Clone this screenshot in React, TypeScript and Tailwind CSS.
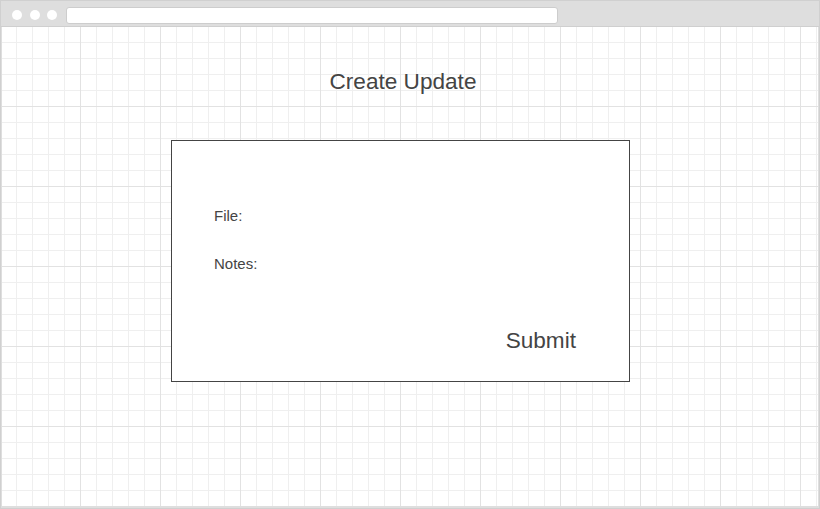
export default function App() {
  return (
    <div className="w-[820px] h-[509px] flex flex-col border border-[#d0d0d0] bg-[#dedede] font-['Liberation_Sans',Arial,sans-serif] text-[#444]">
      {/* Browser chrome */}
      <div className="h-[26px] shrink-0 flex items-start border-b border-[#cfcfcf] pl-[11px]">
        <div className="mt-[9px] flex gap-[7.5px]">
          <span className="w-[10px] h-[10px] rounded-full bg-white" />
          <span className="w-[10px] h-[10px] rounded-full bg-white" />
          <span className="w-[10px] h-[10px] rounded-full bg-white" />
        </div>
        <div className="mt-[6px] ml-[9px] w-[492px] h-[17px] rounded-[3px] bg-white border border-[#cdcdcd]" />
      </div>

      {/* Canvas */}
      <div className="flex-1 mx-px mb-[2px] bg-white bg-[linear-gradient(to_right,#e2e2e2_1px,transparent_1px),linear-gradient(to_bottom,#e2e2e2_1px,transparent_1px),linear-gradient(to_right,#efefef_1px,transparent_1px),linear-gradient(to_bottom,#efefef_1px,transparent_1px)] bg-[length:80px_80px,80px_80px,16px_16px,16px_16px] bg-[position:78px_0,0_79px,14px_0,0_15px]">
        <div className="ml-[169px] w-[459px] flex flex-col">
          <h1 className="mt-[41px] pl-[5px] text-center text-[22.6px] leading-[28px] font-normal">
            Create Update
          </h1>

          <div className="mt-[44px] h-[242px] border border-[#444] bg-white flex flex-col">
            <div className="mt-[66px] pl-[42px] text-[15px] leading-[18px]">File:</div>
            <div className="mt-[30px] pl-[42px] text-[15px] leading-[18px]">Notes:</div>
            <div className="mt-[55px] flex justify-end pr-[53px]">
              <button className="text-[22.6px] leading-[26px]">Submit</button>
            </div>
          </div>
        </div>
      </div>
    </div>
  );
}
